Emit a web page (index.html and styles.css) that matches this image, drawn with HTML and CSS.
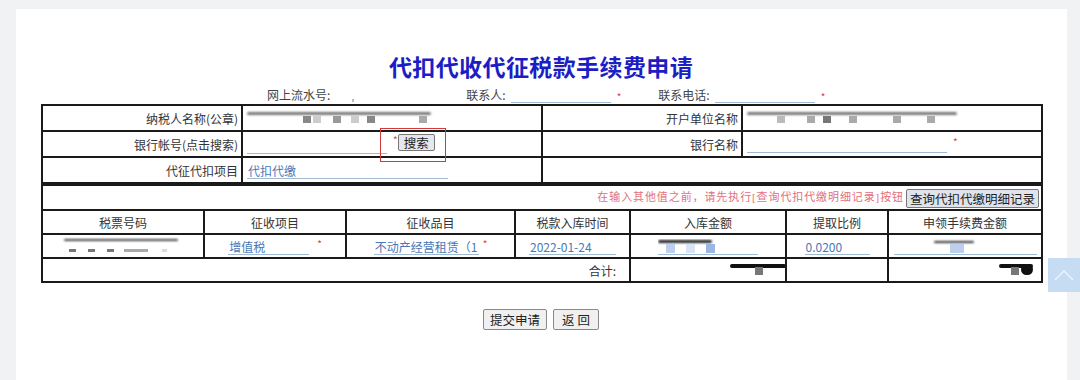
FILE: index.html
```html
<!DOCTYPE html>
<html lang="zh">
<head>
<meta charset="utf-8">
<title>代扣代收代征税款手续费申请</title>
<link rel="stylesheet" href="styles.css">
</head>
<body>
<div class="panel">
  <h1 class="title">代扣代收代征税款手续费申请</h1>
  <div class="meta">
    <span class="m-lbl m1">网上流水号:</span><span class="stub"></span>
    <span class="m-lbl m2">联系人:</span><span class="inp w100"></span><span class="req">*</span>
    <span class="m-lbl m3">联系电话:</span><span class="inp w100"></span><span class="req">*</span>
  </div>
  <div class="form-wrap">
    <table class="t1">
      <colgroup><col class="c200"><col class="c300"><col class="c200"><col class="c300"></colgroup>
      <tr>
        <td class="lbl">纳税人名称(公章)</td>
        <td class="val"><div class="redact r1"><i class="stroke"></i><i class="blk b1"></i><i class="blk b2"></i><i class="blk b3"></i><i class="blk b4"></i><i class="blk b5"></i><i class="blk b6"></i></div></td>
        <td class="lbl">开户单位名称</td>
        <td class="val"><div class="redact r2"><i class="stroke"></i><i class="blk b1"></i><i class="blk b2"></i><i class="blk b3"></i><i class="blk b4"></i><i class="blk b5"></i><i class="blk b6"></i></div></td>
      </tr>
      <tr>
        <td class="lbl">银行帐号(点击搜索)</td>
        <td class="val"><span class="inp w140"></span><span class="req">*</span><button class="btn btn-s">搜索</button></td>
        <td class="lbl">银行名称</td>
        <td class="val"><span class="inp w200"></span><span class="req">*</span></td>
      </tr>
      <tr>
        <td class="lbl">代征代扣项目</td>
        <td class="val"><span class="inp w200 txt">代扣代缴</span></td>
        <td colspan="2"></td>
      </tr>
    </table>
    <table class="t2">
      <colgroup><col class="k1"><col class="k2"><col class="k3"><col class="k4"><col class="k5"><col class="k6"><col class="k7"></colgroup>
      <tr class="notice-row">
        <td colspan="7" class="notice"><span class="warn">在输入其他值之前，请先执行[查询代扣代缴明细记录]按钮</span><button class="btn btn-q">查询代扣代缴明细记录</button></td>
      </tr>
      <tr class="head">
        <td>税票号码</td><td>征收项目</td><td>征收品目</td><td>税款入库时间</td><td>入库金额</td><td>提取比例</td><td>申领手续费金额</td>
      </tr>
      <tr class="data">
        <td><div class="redact r3"><i class="stroke"></i><i class="dash d1"></i><i class="dash d2"></i><i class="dash d3"></i><i class="dash d4"></i><i class="dash d5"></i></div></td>
        <td><span class="inp w80 txt">增值税</span><span class="req">*</span></td>
        <td><span class="inp w104 txt">不动产经营租赁（1</span><span class="req r-tight">*</span></td>
        <td><span class="inp w86 txt">2022-01-24</span></td>
        <td><span class="inp w100 rd"><i class="stroke s-sm"></i><i class="blu u1"></i><i class="blu u2"></i><i class="blu u3"></i></span></td>
        <td><span class="inp w62 txt">0.0200</span></td>
        <td><span class="inp w143 rd"><i class="stroke s-xs"></i><i class="blu u4"></i></span></td>
      </tr>
      <tr class="total">
        <td colspan="4" class="sum">合计:</td>
        <td><div class="tot t-a"><i class="stroke"></i><i class="blk tb"></i></div></td>
        <td></td>
        <td><div class="tot t-b"><i class="stroke"></i><i class="blk tb"></i><i class="dot"></i></div></td>
      </tr>
    </table>
    <div class="hl-box"></div>
  </div>
  <div class="actions">
    <button class="btn btn-f">提交申请</button>
    <button class="btn btn-f btn-back">返 回</button>
  </div>
</div>
<div class="to-top"><svg width="20" height="12" viewBox="0 0 20 12"><path d="M1 11 L10 2 L19 11" fill="none" stroke="#eef5fc" stroke-width="1.4"/></svg></div>
</body>
</html>
```
FILE: styles.css
```css
html, body { margin: 0; padding: 0; }
body {
  background: #f1f2f4;
  font-family: "Noto Sans CJK SC", "Noto Sans", sans-serif;
  font-size: 12px;
  color: #333;
  height: 380px;
  overflow: hidden;
}
.panel {
  margin: 9px 13px 0 16px;
  background: #fff;
  height: 371px;
  padding: 41px 26px 0 25px;
  box-sizing: border-box;
}
.title {
  margin: 0;
  text-align: center;
  font-size: 23px;
  line-height: 32px;
  font-weight: 700;
  color: #1d1dc4;
  letter-spacing: 0.4px;
}
.meta {
  display: flex;
  align-items: flex-end;
  height: 18px;
  margin-top: 3px;
  margin-bottom: 1px;
  line-height: 16px;
  color: #444;
}
.m-lbl { white-space: nowrap; }
.m1 { margin-left: 226px; }
.m2 { margin-left: 112px; }
.m3 { margin-left: 37px; }
.stub { display: inline-block; width: 2px; height: 3px; background: #bbb; margin-left: 22px; margin-bottom: 1px; }
.inp {
  display: inline-block;
  border-bottom: 1px solid #9fb9d1;
  height: 15px;
  line-height: 15px;
  color: #4a78b8;
  vertical-align: bottom;
  white-space: nowrap;
  overflow: hidden;
  text-align: left;
  position: relative;
}
.meta .inp { margin-left: 5px; }
.req { color: #e04040; font-size: 10px; margin-left: 6px; vertical-align: top; line-height: 12px; }
.w62 { width: 64px; }
.w80 { width: 80px; }
.w86 { width: 86px; }
.w100 { width: 100px; }
.w104 { width: 104px; }
.w140 { width: 140px; }
.w143 { width: 143px; }
.w200 { width: 200px; }
.txt { padding-left: 1px; }

.form-wrap { position: relative; width: 1000px; }
table { border-collapse: collapse; width: 1000px; table-layout: fixed; }
td { border: 2px solid #1a1a1a; padding: 0 4px; white-space: nowrap; overflow: hidden; }
.c200 { width: 200px; }
.c300 { width: 300px; }
.t1 tr { height: 26px; }
.t1 .lbl { text-align: right; padding-right: 3px; }
.t1 .val { padding-left: 4px; }
.t1 .val .req { margin-left: 6px; }

.btn {
  font-family: "Noto Sans CJK SC", sans-serif;
  font-size: 12px;
  color: #222;
  background: #e4e8ee;
  border: 1px solid #777;
  border-radius: 2px;
  padding: 0 4px;
  line-height: 15px;
  height: 17px;
  vertical-align: middle;
  cursor: pointer;
}
.btn-s { margin-left: 0; font-size: 12.5px; padding: 0 5px; height: 17px; position: relative; top: -3px; }
.btn-q { font-size: 12.5px; height: 19px; padding: 0 3px; margin-left: 2px; background: #dfe4ec; }

.k1 { width: 162px; } .k2 { width: 142px; } .k3 { width: 169px; } .k4 { width: 115px; }
.k5 { width: 156px; } .k6 { width: 102px; } .k7 { width: 154px; }
.notice-row { height: 25px; }
.notice { text-align: right; padding-right: 2px; }
.warn { color: #e2707c; font-size: 11px; font-family: "Liberation Serif", "Noto Sans CJK SC", serif; letter-spacing: 0.9px; }
.head { height: 24px; }
.head td { text-align: center; }
.data { height: 24px; }
.data td { text-align: center; }
.data .req { margin-left: 8px; }
.data .r-tight { margin-left: 4px; }
.total { height: 24px; }
.sum { text-align: right; padding-right: 13px; }

.redact { position: relative; height: 20px; }
.redact i { position: absolute; display: block; }
.stroke { height: 3px; background: #777; border-radius: 3px; filter: blur(0.8px); }
.r1 .stroke { left: 0; top: 4px; width: 184px; }
.r2 .stroke { left: 0; top: 4px; width: 210px; }
.blk { width: 8px; height: 7px; background: #999; filter: blur(0.6px); }
.r1 .blk, .r2 .blk { top: 8px; }
.r1 .b1 { left: 56px; background: #888; } .r1 .b2 { left: 66px; background: #ccc; } .r1 .b3 { left: 86px; background: #999; }
.r1 .b4 { left: 104px; background: #ccc; } .r1 .b5 { left: 120px; background: #888; } .r1 .b6 { left: 172px; background: #aaa; }
.r2 .b1 { left: 30px; background: #bbb; } .r2 .b2 { left: 60px; background: #aaa; } .r2 .b3 { left: 76px; background: #777; }
.r2 .b4 { left: 102px; background: #aaa; } .r2 .b5 { left: 146px; background: #aaa; } .r2 .b6 { left: 180px; background: #aaa; }
.r3 { height: 20px; }
.r3 .stroke { left: 17px; top: 3px; width: 114px; height: 2px; background: #444; }
.dash { top: 13px; height: 3px; background: #777; filter: blur(0.5px); }
.d1 { left: 22px; width: 7px; } .d2 { left: 41px; width: 7px; } .d3 { left: 60px; width: 7px; }
.d4 { left: 77px; width: 24px; background: #aaa; } .d5 { left: 115px; width: 5px; background: #ddd; }
.rd i { position: absolute; display: block; }
.rd .s-sm { left: 0; top: 1px; width: 54px; height: 3px; background: #222; }
.rd .s-xs { left: 40px; top: 2px; width: 40px; height: 2px; background: #333; }
.blu { top: 5px; width: 9px; height: 9px; background: #bcd0ee; filter: blur(0.5px); }
.u1 { left: 8px; } .u2 { left: 28px; background: #d8e4f4; } .u3 { left: 48px; background: #9bb6e4; }
.u4 { left: 56px; width: 14px; }
.tot { position: relative; height: 20px; }
.tot i { position: absolute; display: block; }
.t-a .stroke { left: 95px; top: 4px; width: 56px; height: 4px; background: #111; filter: none; }
.t-a .tb { left: 120px; top: 7px; width: 8px; height: 8px; background: #777; }
.t-b .stroke { left: 106px; top: 4px; width: 34px; height: 4px; background: #111; filter: none; }
.t-b .tb { left: 118px; top: 7px; width: 8px; height: 8px; background: #777; }
.t-b .dot { left: 128px; top: 4px; width: 12px; height: 11px; border-radius: 6px; background: #111; }

.hl-box {
  position: absolute;
  left: 339px;
  top: 24px;
  width: 64px;
  height: 32px;
  border: 1.5px solid #d23a3a;
}
.actions {
  display: flex;
  justify-content: center;
  gap: 6px;
  margin-top: 26px;
}
.btn-f { font-size: 12.5px; height: 21px; line-height: 18px; padding: 0 6px; background: #f0f0f0; border: 1px solid #8a8a8a; }
.btn-back { padding: 0 8px; }
.to-top {
  position: fixed;
  right: 0;
  top: 258px;
  width: 32px;
  height: 34px;
  background: #c6dcf3;
  display: flex;
  align-items: center;
  justify-content: center;
}
```
